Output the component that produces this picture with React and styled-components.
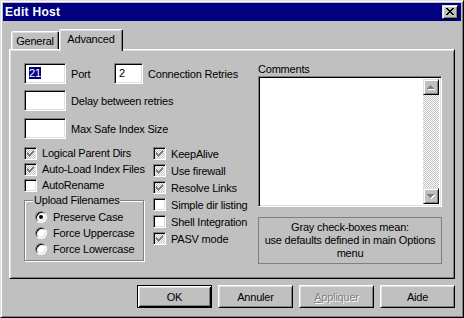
import React from 'react'
import styled, { createGlobalStyle } from 'styled-components'

const GlobalStyle = createGlobalStyle`
  html, body {
    margin: 0;
    padding: 0;
    background: #c0c0c0;
  }
  body {
    font-family: "Liberation Sans", Arial, sans-serif;
    font-size: 11px;
    letter-spacing: -0.2px;
    color: #000;
  }
`

const dither = `
  background-color: #c0c0c0;
  background-image: repeating-conic-gradient(#fff 0 25%, #c0c0c0 0 50%);
  background-size: 2px 2px;
`

const sunken = `
  border: 1px solid;
  border-color: #808080 #fff #fff #808080;
  box-shadow: inset 1px 1px #000, inset -1px -1px #dfdfdf;
`

const raised = `
  border: 1px solid;
  border-color: #dfdfdf #000 #000 #dfdfdf;
  box-shadow: inset 1px 1px #fff, inset -1px -1px #808080;
`

const Window = styled.div`
  box-sizing: border-box;
  width: 464px;
  height: 318px;
  background: #c0c0c0;
  ${raised}
  padding: 2px;
  display: flex;
  flex-direction: column;
`

const TitleBar = styled.div`
  height: 18px;
  background: #000080;
  display: flex;
  align-items: center;
  justify-content: space-between;
  padding: 0 3px 0 2px;
`

const Title = styled.div`
  color: #fff;
  font-weight: bold;
  font-size: 12px;
  letter-spacing: 0.3px;
`

const CloseButton = styled.div`
  box-sizing: border-box;
  width: 16px;
  height: 14px;
  background: #c0c0c0;
  ${raised}
  display: flex;
  svg { display: block; }
`

const Body = styled.div`
  flex: 1;
  display: flex;
  flex-direction: column;
  padding: 8px 6px 0;
`

const TabStrip = styled.div`
  display: flex;
  align-items: flex-end;
  height: 20px;
  padding-left: 2px;
  position: relative;
  z-index: 1;
`

const Tab = styled.div`
  box-sizing: border-box;
  background: #c0c0c0;
  border: 1px solid;
  border-bottom: none;
  border-color: #fff #000 transparent #fff;
  border-radius: 2px 2px 0 0;
  box-shadow: inset -1px 0 #808080, inset 1px 1px #dfdfdf;
  width: ${p => p.$w}px;
  height: ${p => (p.$active ? 22 : 18)}px;
  margin-bottom: ${p => (p.$active ? -2 : 0)}px;
  padding-top: 3px;
  text-align: center;
  line-height: 13px;
`

const Panel = styled.div`
  box-sizing: border-box;
  height: 230px;
  border: 1px solid;
  border-color: #fff #000 #000 #fff;
  box-shadow: inset 1px 1px #dfdfdf, inset -1px -1px #808080;
  padding: 13px 0 0 14px;
  display: flex;
`

const LeftCol = styled.div`
  width: 234px;
  display: flex;
  flex-direction: column;
`

const RightCol = styled.div`
  width: 184px;
  display: flex;
  flex-direction: column;
`

const FieldRow = styled.div`
  display: flex;
  align-items: center;
  height: 21px;
  margin-bottom: ${p => p.$mb || 0}px;
`

const Field = styled.div`
  box-sizing: border-box;
  width: ${p => p.$w}px;
  height: 21px;
  background: #fff;
  ${sunken}
  padding: 3px 0 0 4px;
  line-height: 13px;
`

const Selected = styled.span`
  background: #000080;
  color: #fff;
`

const Label = styled.div`
  margin-left: 5px;
  width: ${p => (p.$w ? `${p.$w}px` : 'auto')};
  white-space: nowrap;
`

const Checks = styled.div`
  display: flex;
  margin-top: 6px;
`

const CheckCol = styled.div`
  width: ${p => p.$w}px;
  display: flex;
  flex-direction: column;
`

const CheckRow = styled.div`
  display: flex;
  align-items: center;
  height: ${p => p.$h}px;
  white-space: nowrap;
`

const Box = styled.div`
  box-sizing: border-box;
  width: 13px;
  height: 13px;
  flex: none;
  ${sunken}
  ${p => (p.$gray ? dither : 'background: #fff;')}
  margin-right: 5px;
  svg { display: block; margin: 2px 0 0 2px; }
`

const Group = styled.fieldset`
  box-sizing: border-box;
  width: 120px;
  margin: 1px 0 0;
  padding: 2px 0 3px 10px;
  border: 1px solid #808080;
  box-shadow: inset 1px 1px #fff, 1px 1px #fff;
  min-inline-size: 0;
`

const Legend = styled.legend`
  margin-left: -2px;
  padding: 0 1px;
  background: #c0c0c0;
  line-height: 13px;
`

const RadioRow = styled.div`
  display: flex;
  align-items: center;
  height: 16px;
  white-space: nowrap;
`

const Radio = styled.div`
  box-sizing: border-box;
  width: 12px;
  height: 12px;
  flex: none;
  border-radius: 50%;
  border: 1px solid;
  border-color: #808080 #fff #fff #808080;
  box-shadow: inset 1px 1px #000, inset -1px -1px #dfdfdf;
  background: #fff;
  margin-right: 6px;
  display: flex;
  align-items: center;
  justify-content: center;
  &::after {
    content: '';
    display: ${p => (p.$on ? 'block' : 'none')};
    width: 4px;
    height: 4px;
    border-radius: 50%;
    background: #000;
  }
`

const CommentsLabel = styled.div`
  line-height: 13px;
`

const Memo = styled.div`
  box-sizing: border-box;
  height: 131px;
  background: #fff;
  ${sunken}
  padding: 2px;
  display: flex;
  justify-content: flex-end;
`

const ScrollBar = styled.div`
  width: 16px;
  display: flex;
  flex-direction: column;
  justify-content: space-between;
  ${dither}
`

const ScrollButton = styled.div`
  box-sizing: border-box;
  width: 16px;
  height: 16px;
  background: #c0c0c0;
  ${raised}
  display: flex;
  align-items: center;
  justify-content: center;
  svg { display: block; }
`

const Note = styled.div`
  box-sizing: border-box;
  height: 47px;
  margin-top: 10px;
  border: 1px solid #808080;
  padding-top: 3px;
  text-align: center;
  line-height: 13px;
`

const ButtonRow = styled.div`
  display: flex;
  justify-content: flex-end;
  gap: 6px;
  margin-top: 6px;
`

const Button = styled.div`
  box-sizing: border-box;
  width: 75px;
  height: 23px;
  background: #c0c0c0;
  border: 1px solid;
  border-color: #fff #000 #000 #fff;
  box-shadow: inset 1px 1px #dfdfdf, inset -1px -1px #808080;
  display: flex;
  align-items: center;
  justify-content: center;
  color: ${p => (p.$disabled ? '#808080' : '#000')};
  text-shadow: ${p => (p.$disabled ? '1px 1px #fff' : 'none')};
  ${p => p.$default && `
    border-color: #000;
    box-shadow: inset 1px 1px #fff, inset -1px -1px #000, inset 2px 2px #dfdfdf, inset -2px -2px #808080;
  `}
`

function pixels(rows, fill, dx = 0, dy = 0) {
  const out = []
  rows.forEach((row, y) => {
    for (let x = 0; x < row.length; x++) {
      if (row[x] === '#') {
        out.push(<rect key={`${fill}-${x}-${y}`} x={x + dx} y={y + dy} width="1" height="1" fill={fill} />)
      }
    }
  })
  return out
}

const CLOSE = [
  '##....##',
  '.##..##.',
  '..####..',
  '...##...',
  '..####..',
  '.##..##.',
  '##....##',
]

const CHECK = [
  '......#',
  '.....##',
  '#...###',
  '##.###.',
  '#####..',
  '.###...',
  '..#....',
]

const UP = ['...#...', '..###..', '.#####.', '#######']
const DOWN = ['#######', '.#####.', '..###..', '...#...']

const CloseGlyph = () => (
  <svg width="14" height="12" shapeRendering="crispEdges">
    {pixels(CLOSE, '#000', 3, 2)}
  </svg>
)

const CheckGlyph = () => (
  <svg width="7" height="7" shapeRendering="crispEdges">
    {pixels(CHECK, '#808080')}
  </svg>
)

const Arrow = ({ rows }) => (
  <svg width="8" height="5" shapeRendering="crispEdges">
    {pixels(rows, '#fff', 1, 1)}
    {pixels(rows, '#808080')}
  </svg>
)

function Check({ gray, h = 16, children }) {
  return (
    <CheckRow $h={h}>
      <Box $gray={gray}>{gray && <CheckGlyph />}</Box>
      {children}
    </CheckRow>
  )
}

export default function App() {
  return (
    <>
      <GlobalStyle />
      <Window>
        <TitleBar>
          <Title>Edit Host</Title>
          <CloseButton><CloseGlyph /></CloseButton>
        </TitleBar>
        <Body>
          <TabStrip>
            <Tab $w={48}>General</Tab>
            <Tab $w={64} $active>Advanced</Tab>
          </TabStrip>
          <Panel>
            <LeftCol>
              <FieldRow $mb={6}>
                <Field $w={42}><Selected>21</Selected></Field>
                <Label $w={43}>Port</Label>
                <Field $w={29}>2</Field>
                <Label>Connection Retries</Label>
              </FieldRow>
              <FieldRow $mb={7}>
                <Field $w={42} />
                <Label>Delay between retries</Label>
              </FieldRow>
              <FieldRow>
                <Field $w={42} />
                <Label>Max Safe Index Size</Label>
              </FieldRow>
              <Checks>
                <CheckCol $w={129}>
                  <Check gray>Logical Parent Dirs</Check>
                  <Check gray>Auto-Load Index Files</Check>
                  <Check>AutoRename</Check>
                  <Group>
                    <Legend>Upload Filenames</Legend>
                    <RadioRow><Radio $on />Preserve Case</RadioRow>
                    <RadioRow><Radio />Force Uppercase</RadioRow>
                    <RadioRow><Radio />Force Lowercase</RadioRow>
                  </Group>
                </CheckCol>
                <CheckCol $w={100}>
                  <Check gray h={17}>KeepAlive</Check>
                  <Check gray h={17}>Use firewall</Check>
                  <Check gray h={17}>Resolve Links</Check>
                  <Check h={17}>Simple dir listing</Check>
                  <Check h={17}>Shell Integration</Check>
                  <Check gray h={17}>PASV mode</Check>
                </CheckCol>
              </Checks>
            </LeftCol>
            <RightCol>
              <CommentsLabel>Comments</CommentsLabel>
              <Memo>
                <ScrollBar>
                  <ScrollButton><Arrow rows={UP} /></ScrollButton>
                  <ScrollButton><Arrow rows={DOWN} /></ScrollButton>
                </ScrollBar>
              </Memo>
              <Note>
                Gray check-boxes mean:<br />
                use defaults defined in main Options<br />
                menu
              </Note>
            </RightCol>
          </Panel>
          <ButtonRow>
            <Button $default>OK</Button>
            <Button>Annuler</Button>
            <Button $disabled><span><u>A</u>ppliquer</span></Button>
            <Button>Aide</Button>
          </ButtonRow>
        </Body>
      </Window>
    </>
  )
}
